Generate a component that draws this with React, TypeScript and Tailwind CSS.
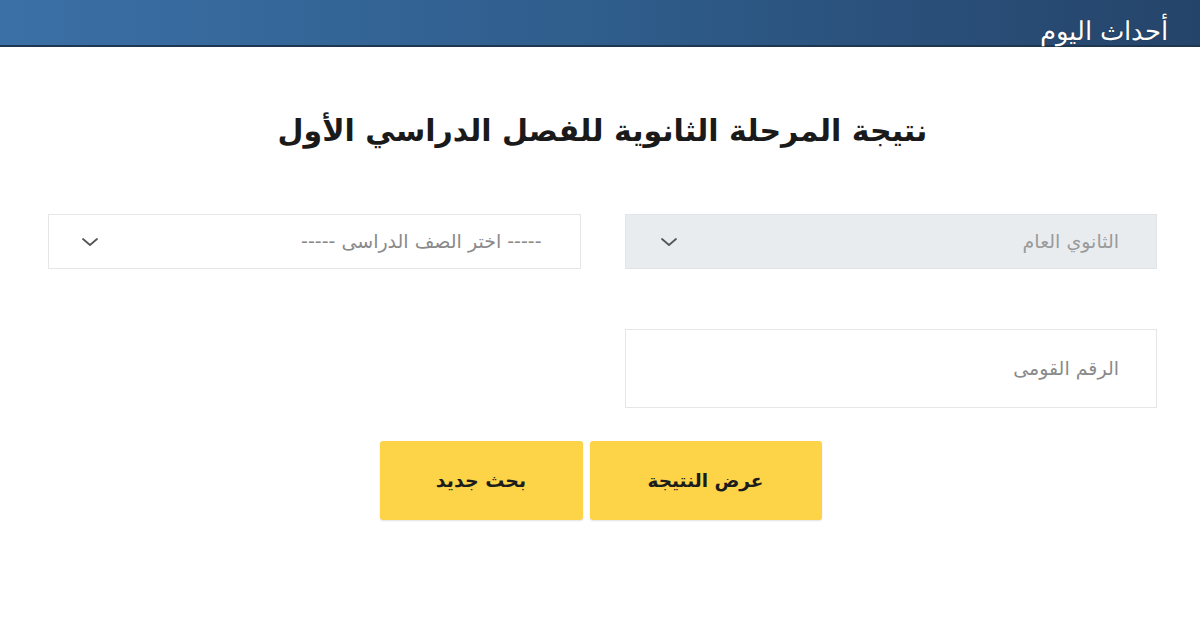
import React from "react";

function Chevron() {
  return (
    <svg width="18" height="10" viewBox="0 0 18 10" fill="none">
      <path d="M2 2 L9 8 L16 2" stroke="#555" strokeWidth="1.8" strokeLinecap="round" strokeLinejoin="round" />
    </svg>
  );
}

export default function App() {
  return (
    <div className="w-[1200px] h-[628px] bg-white overflow-hidden relative" style={{ fontFamily: '"DejaVu Sans", sans-serif' }}>
      <div className="h-[47px] bg-gradient-to-r from-[#3b70a6] via-[#2f5d8c] to-[#25446a] border-b-2 border-[#1f3650]" />
      <div className="absolute right-[32px] top-[18px] text-white text-[26px] font-light leading-none [text-shadow:0_0_1px_rgba(0,0,0,0.6)]" dir="rtl">أحداث اليوم</div>

      <div dir="rtl" className="pl-[48px] pr-[43px]">
        <h1 className="text-center font-bold text-[30px] text-[#1a1a1a] mt-[64px] h-[40px] leading-[40px]">
          نتيجة المرحلة الثانوية للفصل الدراسي الأول
        </h1>
        <div className="grid grid-cols-2 gap-x-[44px] mt-[63px]">
          <div className="h-[55px] bg-[#e9ecef] border border-[#e2e4e6] flex items-center justify-between pr-[37px] pl-[34px]">
            <span className="text-[19px] text-[#9a9a9a]">الثانوي العام</span>
            <Chevron />
          </div>
          <div className="h-[55px] bg-white border border-[#e6e6e6] flex items-center justify-between pr-[38px] pl-[32px]">
            <span className="text-[19px] text-[#8a8a8a]">----- اختر الصف الدراسى -----</span>
            <Chevron />
          </div>
          <div className="h-[79px] mt-[60px] bg-white border border-[#e6e6e6] flex items-center pr-[37px]">
            <span className="text-[19px] text-[#8a8a8a]">الرقم القومى</span>
          </div>
          <div />
        </div>
        <div className="flex justify-center gap-[7px] mt-[33px] pr-[4px]">
          <button className="w-[232px] h-[79px] bg-[#fdd447] rounded-[3px] shadow-[0_1px_2px_rgba(0,0,0,0.12)] text-[18.5px] font-bold text-[#1c1c1c]">
            عرض النتيجة
          </button>
          <button className="w-[203px] h-[79px] bg-[#fdd447] rounded-[3px] shadow-[0_1px_2px_rgba(0,0,0,0.12)] text-[19px] font-bold text-[#1c1c1c]">
            بحث جديد
          </button>
        </div>
      </div>
    </div>
  );
}
